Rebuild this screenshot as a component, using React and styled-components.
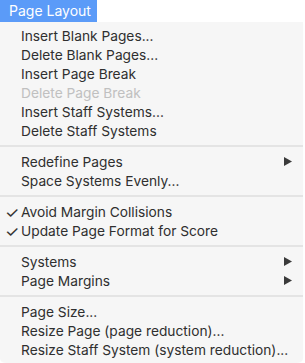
import styled, { createGlobalStyle } from "styled-components";

const GlobalStyle = createGlobalStyle`
  html, body {
    margin: 0;
    padding: 0;
    background: #ffffff;
  }
  body {
    font-family: Inter, "Liberation Sans", sans-serif;
    -webkit-font-smoothing: antialiased;
  }
`;

const sections = [
  [
    { label: "Insert Blank Pages..." },
    { label: "Delete Blank Pages..." },
    { label: "Insert Page Break" },
    { label: "Delete Page Break", disabled: true },
    { label: "Insert Staff Systems..." },
    { label: "Delete Staff Systems" },
  ],
  [
    { label: "Redefine Pages", submenu: true },
    { label: "Space Systems Evenly..." },
  ],
  [
    { label: "Avoid Margin Collisions", checked: true },
    { label: "Update Page Format for Score", checked: true },
  ],
  [
    { label: "Systems", submenu: true },
    { label: "Page Margins", submenu: true },
  ],
  [
    { label: "Page Size..." },
    { label: "Resize Page (page reduction)..." },
    { label: "Resize Staff System (system reduction)..." },
  ],
];

function App() {
  return (
    <Wrap>
      <GlobalStyle />
      <MenuBar>
        <Title>Page Layout</Title>
      </MenuBar>
      <Menu>
        {sections.map((items, i) => (
          <Section key={i}>
            {i > 0 && <Separator />}
            {items.map((item) => (
              <Item key={item.label} $disabled={item.disabled}>
                <Check>{item.checked ? "✓" : ""}</Check>
                <Label>{item.label}</Label>
                {item.submenu && (
                  <Arrow viewBox="0 0 8 9">
                    <path d="M0 0 L8 4.5 L0 9 Z" />
                  </Arrow>
                )}
              </Item>
            ))}
          </Section>
        ))}
      </Menu>
    </Wrap>
  );
}

export default App;

const Wrap = styled.div`
  width: 305px;
  height: 363px;
  display: flex;
  flex-direction: column;
`;

const MenuBar = styled.div`
  height: 22px;
  display: flex;
`;

const Title = styled.div`
  box-sizing: border-box;
  width: 97px;
  background: #5b9bf8;
  color: #ffffff;
  font-size: 14px;
  line-height: 22px;
  padding-left: 9px;
  white-space: nowrap;
`;

const Menu = styled.div`
  width: 303px;
  background: #f6f6f6;
  border-radius: 0 0 5px 5px;
  padding: 4px 0 3px;
  box-shadow: 0 1px 1px rgba(0, 0, 0, 0.04);
`;

const Section = styled.div`
  display: flex;
  flex-direction: column;
`;

const Separator = styled.div`
  height: 2px;
  background: #e4e4e4;
  margin: 5px 0 5px;
`;

const Item = styled.div`
  height: 19px;
  display: flex;
  align-items: center;
  font-size: 13.75px;
  color: ${(p) => (p.$disabled ? "#c0c0c0" : "#2f2f2f")};
  padding-right: 11px;
`;

const Check = styled.span`
  width: 21px;
  padding-left: 5px;
  box-sizing: border-box;
  font-size: 16px;
  line-height: 1;
  color: #333;
`;

const Label = styled.span`
  flex: 1;
  white-space: nowrap;
`;

const Arrow = styled.svg`
  width: 8px;
  height: 9px;
  fill: #3a3a3a;
`;
